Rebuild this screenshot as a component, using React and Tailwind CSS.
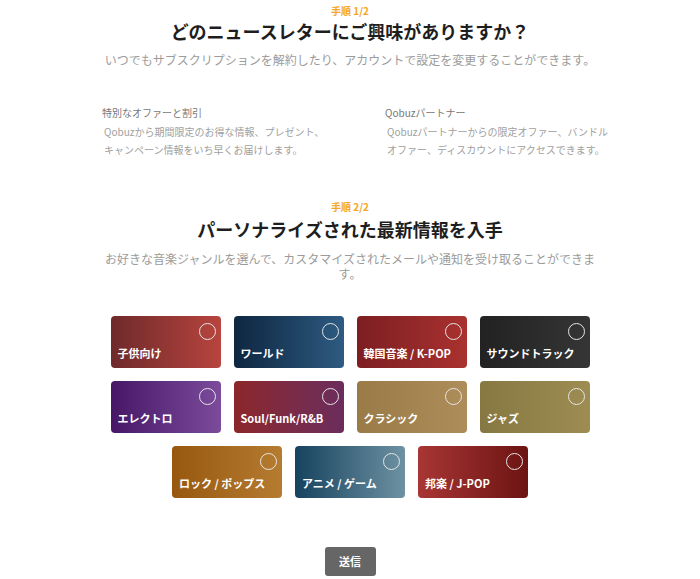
import React, { useState } from 'react';

const genres = [
  [
    { name: '子供向け', bg: 'bg-gradient-to-r from-[#6f2a2b] to-[#b8443e]' },
    { name: 'ワールド', bg: 'bg-gradient-to-r from-[#0e2741] to-[#2e5b82]' },
    { name: '韓国音楽 / K-POP', bg: 'bg-gradient-to-r from-[#7d1e22] to-[#a9322f]' },
    { name: 'サウンドトラック', bg: 'bg-gradient-to-r from-[#222222] to-[#353535]' },
  ],
  [
    { name: 'エレクトロ', bg: 'bg-gradient-to-r from-[#471766] to-[#7c4b9c]' },
    { name: 'Soul/Funk/R&B', bg: 'bg-gradient-to-r from-[#8c2629] to-[#6b2c5c]' },
    { name: 'クラシック', bg: 'bg-gradient-to-r from-[#9a7b47] to-[#ad8d59]' },
    { name: 'ジャズ', bg: 'bg-gradient-to-r from-[#877843] to-[#9d8d52]' },
  ],
  [
    { name: 'ロック / ポップス', bg: 'bg-gradient-to-r from-[#97580e] to-[#b57c30]' },
    { name: 'アニメ / ゲーム', bg: 'bg-gradient-to-r from-[#15435f] to-[#6e92a2]' },
    { name: '邦楽 / J-POP', bg: 'bg-gradient-to-r from-[#a83634] to-[#6c1413]' },
  ],
];

const GenreCard = ({ genre, selected, onToggle }) => (
  <button
    onClick={onToggle}
    className={`relative w-[110px] h-[52px] rounded-[4px] ${genre.bg} text-left`}
  >
    <span
      className={`absolute top-[7px] right-[5px] w-[17px] h-[17px] rounded-full border-[1.5px] border-[#e6e6e6] ${selected ? 'bg-white' : ''}`}
    ></span>
    <span className="absolute left-[7px] bottom-[8px] text-[11px] leading-[14px] font-bold text-white">
      {genre.name}
    </span>
  </button>
);

const App = () => {
  const [selected, setSelected] = useState([]);

  const toggle = (name) => {
    setSelected((prev) => (prev.includes(name) ? prev.filter((n) => n !== name) : [...prev, name]));
  };

  return (
    <div
      className="w-[700px] h-[579px] bg-white flex flex-col items-center overflow-hidden"
      style={{ fontFamily: '"Noto Sans CJK JP", "Noto Sans", sans-serif' }}
    >
      {/* step 1 */}
      <p className="mt-[4px] text-[10px] leading-[14px] font-bold text-[#f5a623]">手順 1/2</p>
      <h1 className="mt-[2px] text-[18px] leading-[22px] font-bold text-[#1e1e1e]">どのニュースレターにご興味がありますか？</h1>
      <p className="mt-[10px] w-[495px] text-center text-[12px] leading-[15px] text-[#9b9b9b]">
        いつでもサブスクリプションを解約したり、アカウントで設定を変更することができます。
      </p>

      <div className="mt-[39px] w-full pl-[102px] grid grid-cols-[283px_283px]">
        <div>
          <p className="text-[10px] leading-[14px] text-[#777777]">特別なオファーと割引</p>
          <p className="mt-[3px] pl-[2px] text-[10px] leading-[18px] text-[#a0a0a0]">
            Qobuzから期間限定のお得な情報、プレゼント、
            <br />
            キャンペーン情報をいち早くお届けします。
          </p>
        </div>
        <div>
          <p className="text-[10px] leading-[14px] text-[#777777]">Qobuzパートナー</p>
          <p className="mt-[3px] pl-[2px] text-[10px] leading-[18px] text-[#a0a0a0]">
            Qobuzパートナーからの限定オファー、バンドル
            <br />
            オファー、ディスカウントにアクセスできます。
          </p>
        </div>
      </div>

      {/* step 2 */}
      <p className="mt-[41px] text-[10px] leading-[14px] font-bold text-[#f5a623]">手順 2/2</p>
      <h2 className="mt-[4px] text-[18px] leading-[22px] font-bold text-[#1e1e1e]">パーソナライズされた最新情報を入手</h2>
      <p className="mt-[11px] w-[495px] text-center text-[12px] leading-[15px] text-[#9b9b9b]">
        お好きな音楽ジャンルを選んで、カスタマイズされたメールや通知を受け取ることができます。
      </p>

      <div className="mt-[35px] flex flex-col items-center gap-[13px]">
        {genres.map((row, i) => (
          <div key={i} className="flex gap-[13px]">
            {row.map((g) => (
              <GenreCard key={g.name} genre={g} selected={selected.includes(g.name)} onToggle={() => toggle(g.name)} />
            ))}
          </div>
        ))}
      </div>

      <button className="mt-[49px] w-[51px] h-[29px] rounded-[3px] bg-[#666666] text-white text-[11px] font-bold">
        送信
      </button>
    </div>
  );
};

export default App;
